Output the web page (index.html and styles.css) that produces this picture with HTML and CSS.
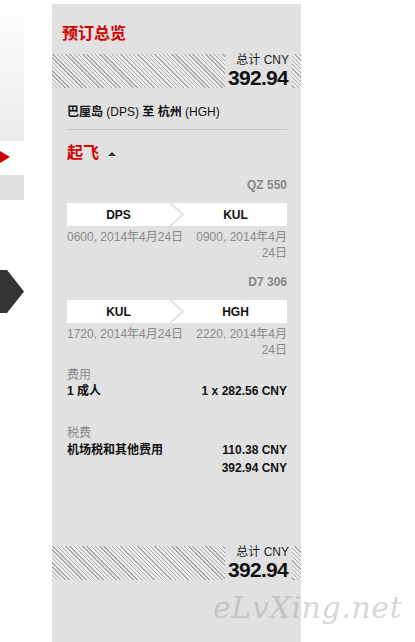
FILE: index.html
```html
<!DOCTYPE html>
<html lang="zh">
<head>
<meta charset="utf-8">
<title>预订总览</title>
<link rel="stylesheet" href="styles.css">
</head>
<body>
<div class="page">
  <aside class="side">
    <div class="side-fade"></div>
    <div class="side-marker"><span class="red-tri"></span></div>
    <div class="side-tab"></div>
    <svg class="side-arrow" width="24" height="43" viewBox="0 0 24 43"><polygon points="0,0 7,0 24,21.5 7,43 0,43" fill="#333"/></svg>
  </aside>
  <section class="panel">
    <h2 class="title">预订总览</h2>
    <div class="total-band">
      <div class="total-box">
        <div class="total-label">总计 CNY</div>
        <div class="total-amount">392.94</div>
      </div>
    </div>
    <div class="content">
      <div class="route">巴厘岛 <span class="lat">(DPS)</span> 至 杭州 <span class="lat">(HGH)</span></div>
      <div class="divider"></div>
      <div class="depart">起飞<span class="caret"></span></div>

      <div class="flight">
        <div class="flight-code">QZ 550</div>
        <div class="leg-bar">
          <div class="leg-cell">DPS</div>
          <svg class="chev" width="14" height="23" viewBox="0 0 14 23"><polyline points="0,0 13,11.5 0,23" fill="none" stroke="#e2e2e2" stroke-width="2"/></svg>
          <div class="leg-cell">KUL</div>
        </div>
        <div class="leg-times">
          <div class="t-left">0600, 2014年4月24日</div>
          <div class="t-right">0900, 2014年4月<span class="nw">24日</span></div>
        </div>
      </div>

      <div class="flight second">
        <div class="flight-code">D7 306</div>
        <div class="leg-bar">
          <div class="leg-cell">KUL</div>
          <svg class="chev" width="14" height="23" viewBox="0 0 14 23"><polyline points="0,0 13,11.5 0,23" fill="none" stroke="#e2e2e2" stroke-width="2"/></svg>
          <div class="leg-cell">HGH</div>
        </div>
        <div class="leg-times">
          <div class="t-left">1720, 2014年4月24日</div>
          <div class="t-right">2220, 2014年4月<span class="nw">24日</span></div>
        </div>
      </div>

      <div class="fee-group">
        <div class="fee-label">费用</div>
        <div class="fee-row">
          <div class="fee-name">1 成人</div>
          <div class="fee-vals"><div>1 x 282.56 CNY</div></div>
        </div>
      </div>

      <div class="fee-group taxes">
        <div class="fee-label">税费</div>
        <div class="fee-row">
          <div class="fee-name">机场税和其他费用</div>
          <div class="fee-vals"><div>110.38 CNY</div><div>392.94 CNY</div></div>
        </div>
      </div>
    </div>
    <div class="total-band bottom">
      <div class="total-box">
        <div class="total-label">总计 CNY</div>
        <div class="total-amount">392.94</div>
      </div>
    </div>
  </section>
</div>
<div class="watermark">eLvXing.net</div>
</body>
</html>
```
FILE: styles.css
```css
* { box-sizing: border-box; }
html, body { margin: 0; padding: 0; background: #fff; }
body {
  font-family: "Liberation Sans", "Noto Sans CJK SC", sans-serif;
  font-size: 12px;
  color: #111;
  width: 415px;
  height: 642px;
  overflow: hidden;
  position: relative;
}
.page { display: flex; align-items: flex-start; }

.side { width: 24px; display: flex; flex-direction: column; }
.side-fade { height: 141px; background: linear-gradient(#ffffff, #ebebeb); }
.side-marker { height: 34px; padding-top: 10px; }
.red-tri {
  display: block; width: 0; height: 0;
  border-top: 6.5px solid transparent;
  border-bottom: 6.5px solid transparent;
  border-left: 10px solid #cc0000;
}
.side-tab { height: 25px; background: #e1e1e1; }
.side-arrow { display: block; margin-top: 70px; }

.panel {
  margin-left: 28px;
  margin-top: 4px;
  width: 249px;
  height: 640px;
  background: #e1e1e1;
  padding-top: 20px;
}
.title {
  margin: 0;
  padding-left: 10px;
  font-size: 16px;
  line-height: 20px;
  font-weight: bold;
  color: #d40000;
}
.total-band {
  margin-top: 10px;
  height: 34px;
  display: flex;
  justify-content: flex-end;
  padding-right: 9px;
  background: repeating-linear-gradient(45deg, #a9a9a9 0 1px, #ececec 1px 3px);
}
.total-band.bottom { margin-top: 70px; }
.total-box {
  width: 67px;
  background: #e1e1e1;
  text-align: right;
  padding-right: 3px;
}
.total-label { font-size: 12px; line-height: 13px; color: #222; }
.total-amount {
  font-size: 21px; line-height: 21px; font-weight: bold; color: #111;
  letter-spacing: -0.7px; margin-right: 1px;
}

.content { padding: 0 14px 0 15px; }
.route { margin-top: 16px; font-weight: bold; line-height: 16px; color: #111; }
.route .lat { font-weight: normal; }
.divider { margin-top: 9px; height: 1px; background: #c6c6c6; }
.depart {
  margin-top: 13px;
  font-size: 16px; line-height: 20px; font-weight: bold; color: #d40000;
  display: flex; align-items: center;
}
.caret {
  display: inline-block; width: 0; height: 0; margin-left: 9px; margin-top: 1px;
  border-left: 4px solid transparent;
  border-right: 4px solid transparent;
  border-bottom: 4px solid #333;
}

.flight { margin-top: 15px; }
.flight.second { margin-top: 14px; }
.flight-code { text-align: right; font-weight: bold; color: #888; line-height: 14px; }
.leg-bar { margin-top: 11px; height: 23px; background: #fff; display: flex; }
.leg-cell { flex: 1; text-align: center; font-weight: bold; line-height: 24px; color: #111; }
.chev { display: block; flex: none; }
.leg-times {
  margin-top: 3px;
  display: grid; grid-template-columns: 1fr 1fr;
  color: #8a8a8a; line-height: 16px;
}
.t-left { white-space: nowrap; }
.t-right { text-align: right; }
.nw { white-space: nowrap; }

.fee-group { margin-top: 9px; }
.fee-group.taxes { margin-top: 26px; }
.fee-label { color: #8a8a8a; line-height: 16px; }
.taxes .fee-label { line-height: 17px; }
.fee-row { display: flex; justify-content: space-between; font-weight: bold; line-height: 16px; color: #111; }
.fee-vals { text-align: right; }
.fee-vals div + div { margin-top: 2px; }

.watermark {
  position: absolute;
  left: 213px;
  top: 592px;
  font-family: "DejaVu Serif", serif;
  font-style: italic;
  font-size: 30px;
  line-height: 32px;
  letter-spacing: 0.6px;
  color: rgba(150, 150, 150, 0.4);
  white-space: nowrap;
}
```
